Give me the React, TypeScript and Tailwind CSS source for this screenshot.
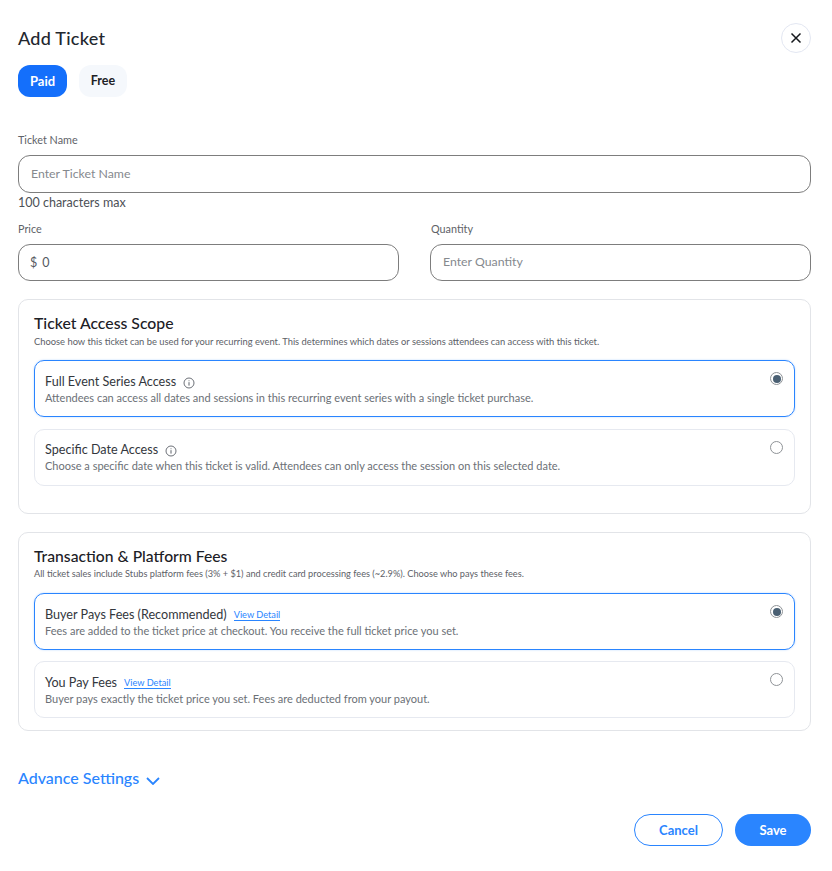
import React from "react";

const font = { fontFamily: "Lato, sans-serif" };

const InfoIcon = () => (
  <svg width="12" height="12" viewBox="0 0 12 12" fill="none" className="mt-[3px]">
    <circle cx="6" cy="6" r="5" stroke="#5b6068" strokeWidth="0.9" />
    <path d="M6 5.2V8.6M6 3.4V4.2" stroke="#5b6068" strokeWidth="1" />
  </svg>
);

const Radio = ({ checked }: { checked?: boolean }) => (
  <span className="absolute right-[11px] top-[11px] flex h-[13px] w-[13px] items-center justify-center rounded-full border border-[#8f9397] bg-white">
    {checked && <span className="h-[8px] w-[8px] rounded-full bg-[#4a6073]" />}
  </span>
);

const ViewDetail = () => (
  <a className="border-b border-[#2a85ff] text-[9.2px] leading-[11px] text-[#2a85ff]">View Detail</a>
);

const Option = ({
  checked,
  title,
  text,
  children,
  box,
}: {
  checked?: boolean;
  title: string;
  text: string;
  children?: React.ReactNode;
  box?: string;
}) => (
  <div
    className={`relative rounded-[10px] border pl-[10px] ${box ?? "h-[57px] pt-[12px]"} ${
      checked ? "border-[#2a85ff] shadow-[0_0_2px_rgba(42,133,255,0.35)]" : "border-[#e6e9f0]"
    }`}
  >
    <div className="flex h-[17px] items-center gap-[7px]">
      <span className="text-[12.6px] leading-[17px] text-[#33373d]">{title}</span>
      {children}
    </div>
    <p className="text-[11px] leading-[16px] text-[#6b7076]">{text}</p>
    <Radio checked={checked} />
  </div>
);

export default function App() {
  return (
    <div className="h-[871px] w-[832px] overflow-hidden bg-white pl-[18px] pr-[21px] pt-[23px]" style={font}>
      <div className="flex h-[30px] items-center justify-between">
        <h1 className="text-[18px] font-medium tracking-[0.25px] text-[#23272e]">Add Ticket</h1>
        <button className="flex h-[30px] w-[30px] items-center justify-center rounded-full border border-[#e3e7f2] text-[#15181c]">
          <svg width="12" height="12" viewBox="0 0 12 12" fill="none">
            <path d="M1.5 1.5L10.5 10.5M10.5 1.5L1.5 10.5" stroke="currentColor" strokeWidth="1.5" />
          </svg>
        </button>
      </div>

      <div className="mt-[12px] flex gap-3">
        <button className="h-[32px] w-[49px] rounded-[12px] bg-[#146ffb] pt-[1px] text-[13px] font-bold text-white">Paid</button>
        <button className="h-[32px] w-[48px] rounded-[12px] bg-[#f5f8fc] pt-[1px] text-[12.5px] font-bold text-[#1d2126]">Free</button>
      </div>

      <label className="mt-[35px] block text-[10.8px] leading-[16px] text-[#5e6268]">Ticket Name</label>
      <div className="mt-[7px] flex h-[38px] items-center rounded-[12px] border border-[#7d7d7d] pl-[12px] pt-[1px] text-[12.3px] text-[#85898e]">
        Enter Ticket Name
      </div>
      <p className="mt-[1px] text-[12.5px] leading-[17px] text-[#4c5056]">100 characters max</p>

      <div className="mt-[10px] grid grid-cols-2 gap-[31px]">
        <div>
          <label className="block text-[10.8px] leading-[16px] text-[#5e6268]">Price</label>
          <div className="mt-[7px] flex h-[37px] items-center gap-[5px] rounded-[12px] border border-[#7d7d7d] pl-[11px] pt-[1px] text-[12.5px] text-[#55595f]">
            <span>$</span>
            <span>0</span>
          </div>
        </div>
        <div>
          <label className="block pl-[1px] text-[10.8px] leading-[16px] text-[#5e6268]">Quantity</label>
          <div className="mt-[7px] flex h-[37px] items-center rounded-[12px] border border-[#7d7d7d] pl-[12px] text-[12.3px] text-[#85898e]">
            Enter Quantity
          </div>
        </div>
      </div>

      <section className="mt-[18px] h-[215px] rounded-[10px] border border-[#e2e4e8] px-[15px] pt-[13px]">
        <h2 className="text-[15.8px] font-medium leading-[20px] text-[#1c2026]">Ticket Access Scope</h2>
        <p className="mt-[2px] text-[9.35px] leading-[13px] text-[#5d6167]">
          Choose how this ticket can be used for your recurring event. This determines which dates or sessions attendees can access with this ticket.
        </p>
        <div className="mt-[12px] flex flex-col gap-[12px]">
          <Option
            checked
            title="Full Event Series Access"
            text="Attendees can access all dates and sessions in this recurring event series with a single ticket purchase."
          >
            <InfoIcon />
          </Option>
          <Option
            box="h-[57px] pt-[11px]"
            title="Specific Date Access"
            text="Choose a specific date when this ticket is valid. Attendees can only access the session on this selected date."
          >
            <InfoIcon />
          </Option>
        </div>
      </section>

      <section className="mt-[18px] h-[199px] rounded-[10px] border border-[#e2e4e8] px-[15px] pt-[13px]">
        <h2 className="text-[15.7px] font-medium leading-[20px] text-[#1c2026]">Transaction &amp; Platform Fees</h2>
        <p className="mt-[1px] text-[9.2px] leading-[13px] text-[#5d6167]">
          All ticket sales include Stubs platform fees (3% + $1) and credit card processing fees (~2.9%). Choose who pays these fees.
        </p>
        <div className="mt-[13px] flex flex-col gap-[11px]">
          <Option
            checked
            title="Buyer Pays Fees (Recommended)"
            text="Fees are added to the ticket price at checkout. You receive the full ticket price you set."
          >
            <ViewDetail />
          </Option>
          <Option
            title="You Pay Fees"
            text="Buyer pays exactly the ticket price you set. Fees are deducted from your payout."
          >
            <ViewDetail />
          </Option>
        </div>
      </section>

      <div className="mt-[37px] flex items-center gap-[7px] text-[#2a85ff]">
        <span className="text-[16px] font-medium leading-[20px]">Advance Settings</span>
        <svg width="14" height="8" viewBox="0 0 14 8" fill="none" className="mt-[6px]">
          <path d="M1 1L7 7L13 1" stroke="currentColor" strokeWidth="1.8" />
        </svg>
      </div>

      <div className="mt-[26px] flex justify-end gap-3">
        <button className="h-[32px] w-[89px] rounded-full border border-[#2a85ff] pt-[1px] text-[13px] font-bold text-[#2a85ff]">Cancel</button>
        <button className="h-[32px] w-[76px] rounded-full bg-[#2a85ff] pt-[1px] text-[13px] font-bold text-white">Save</button>
      </div>
    </div>
  );
}
